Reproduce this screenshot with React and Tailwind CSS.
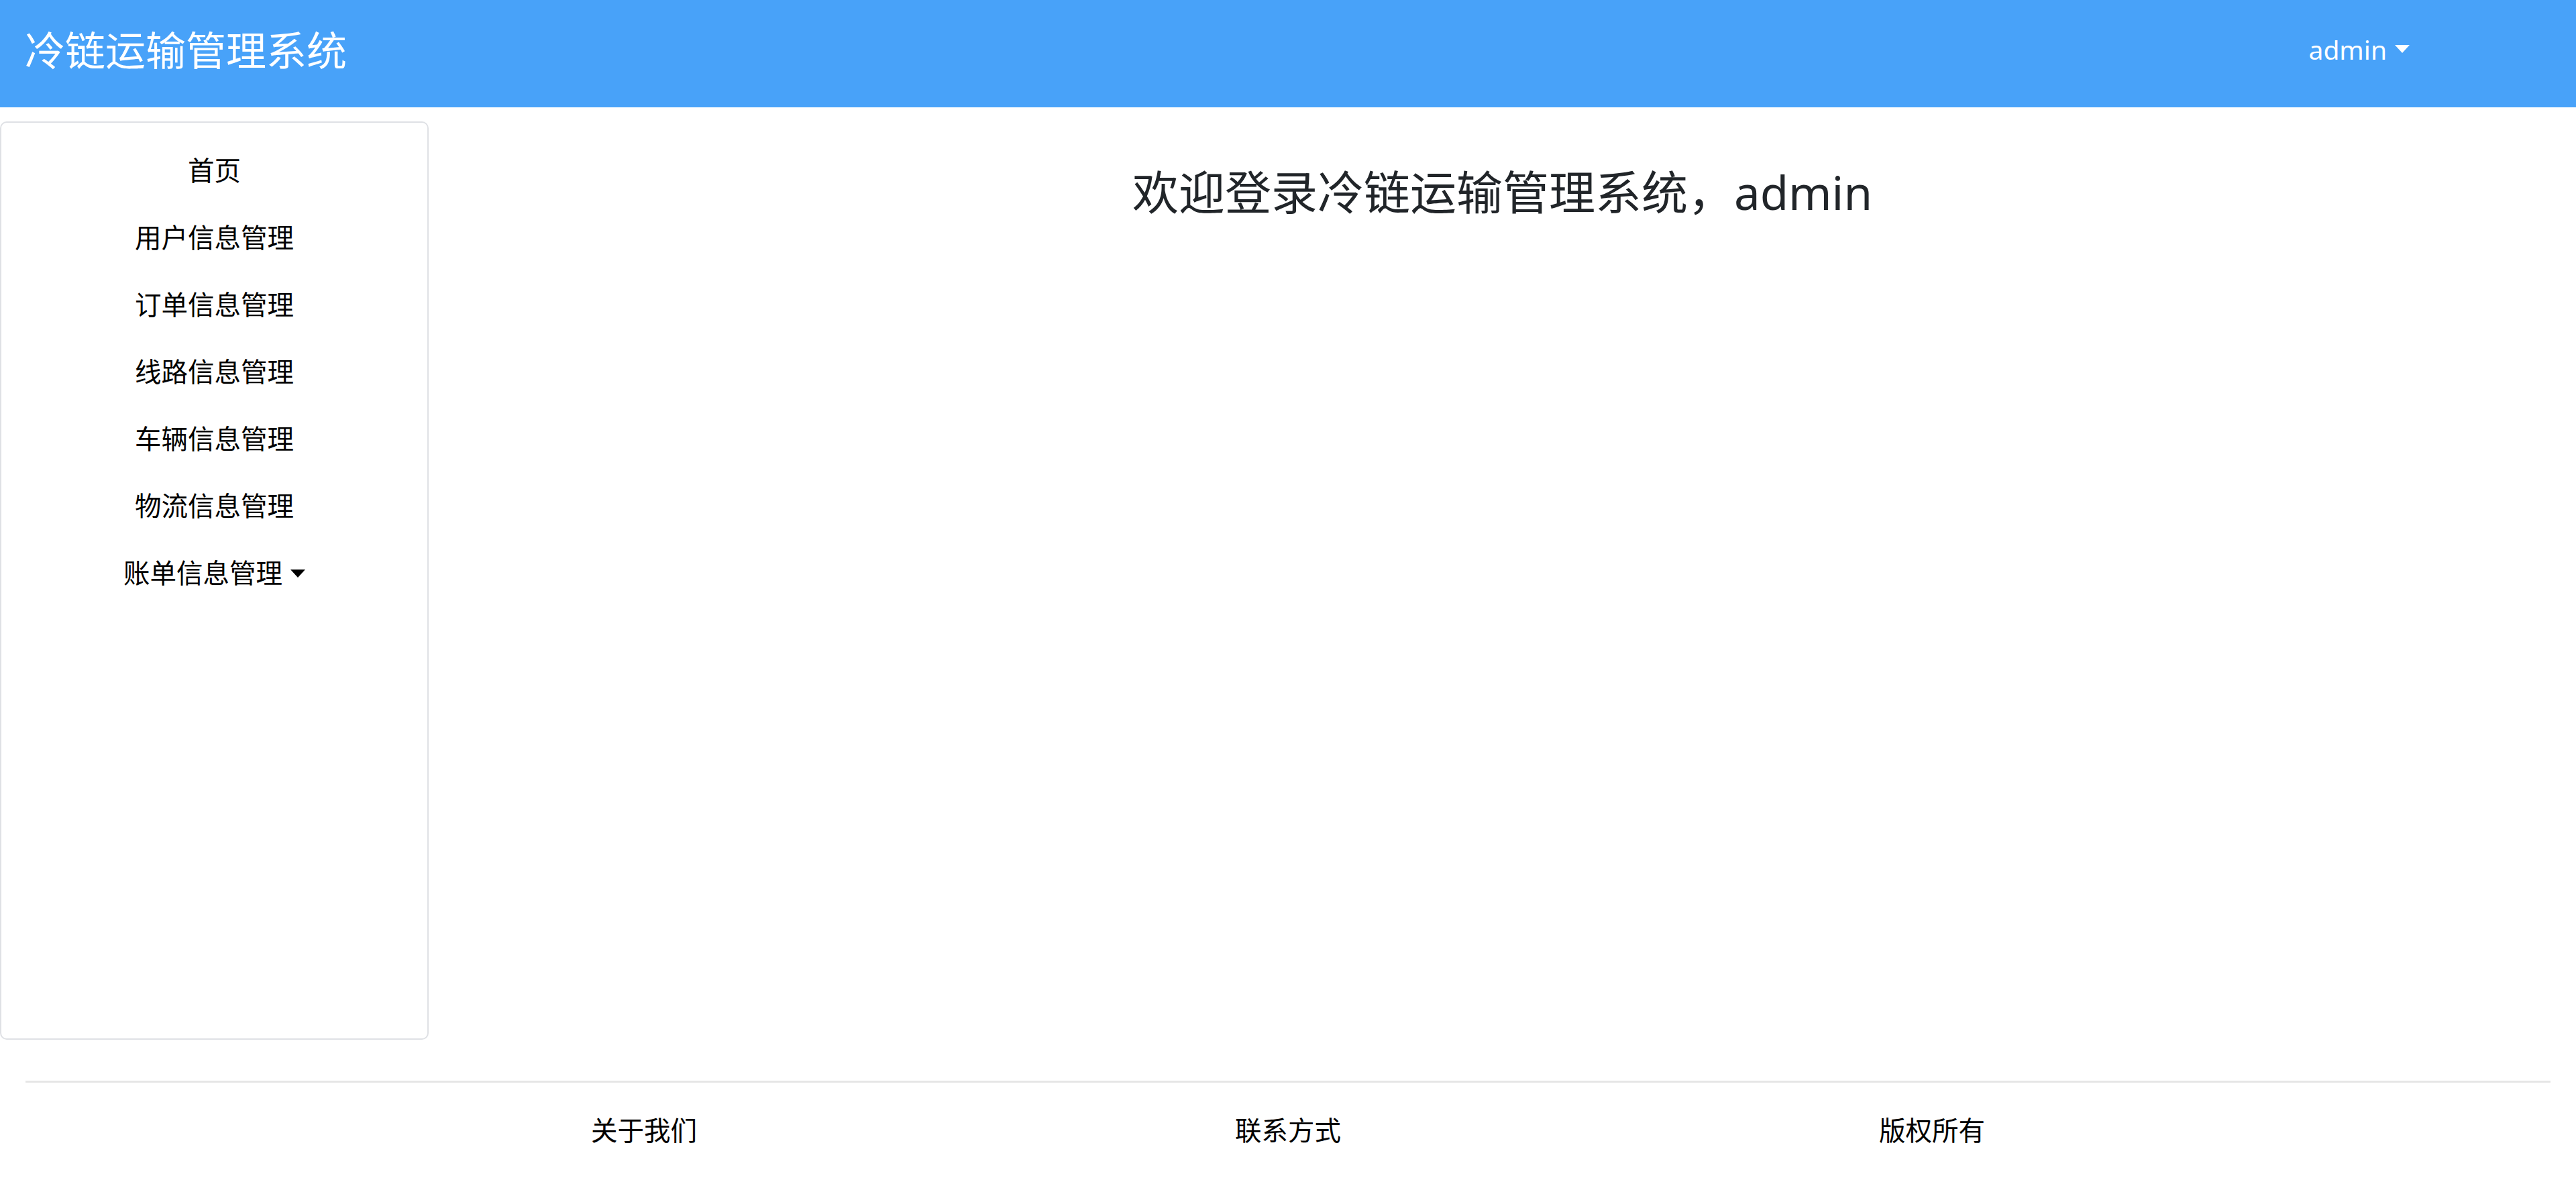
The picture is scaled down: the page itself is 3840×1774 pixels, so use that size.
import React from 'react';

const font = { fontFamily: '"Noto Sans", "Noto Sans CJK SC", sans-serif' };

const menu = ['首页', '用户信息管理', '订单信息管理', '线路信息管理', '车辆信息管理', '物流信息管理'];

function Caret({ color }) {
  return (
    <span
      className={`ml-[12px] inline-block w-0 h-0 border-x-[11px] border-x-transparent border-t-[12px] ${color}`}
    />
  );
}

export default function App() {
  return (
    <div className="min-h-screen w-full bg-white" style={font}>
      {/* Top bar */}
      <header className="h-[160px] bg-[#48a2f9] flex items-center justify-between pl-[37px] pr-[248px]">
        <span className="text-white text-[60px] leading-none pb-[10px]">冷链运输管理系统</span>
        <span className="flex items-center text-white text-[39px] leading-none pb-[14px]">
          admin
          <Caret color="border-t-white" />
        </span>
      </header>

      {/* Body */}
      <div className="flex mt-[21px]">
        <aside className="w-[639px] h-[1369px] shrink-0 border-2 border-[#dfe1e5] rounded-[10px] pt-[22px]">
          <ul className="flex flex-col">
            {menu.map((item) => (
              <li key={item} className="h-[100px] flex items-center justify-center text-[39.5px] text-black">
                {item}
              </li>
            ))}
            <li className="h-[100px] flex items-center justify-center text-[39.5px] text-black">
              账单信息管理
              <Caret color="border-t-black" />
            </li>
          </ul>
        </aside>
        <main className="flex-1 text-center pt-[65px]">
          <h3 className="text-[69px] leading-[80px] text-[#212529]">欢迎登录冷链运输管理系统，admin</h3>
        </main>
      </div>

      {/* Footer */}
      <footer className="mt-[61px]">
        <hr className="mx-[38px] border-0 border-t-[3px] border-[#e6e6e6]" />
        <div className="grid grid-cols-3 px-[480px] pt-[42px] pb-[40px] text-[39.5px] text-black leading-[58px]">
          <span className="text-center">关于我们</span>
          <span className="text-center">联系方式</span>
          <span className="text-center">版权所有</span>
        </div>
      </footer>
    </div>
  );
}
